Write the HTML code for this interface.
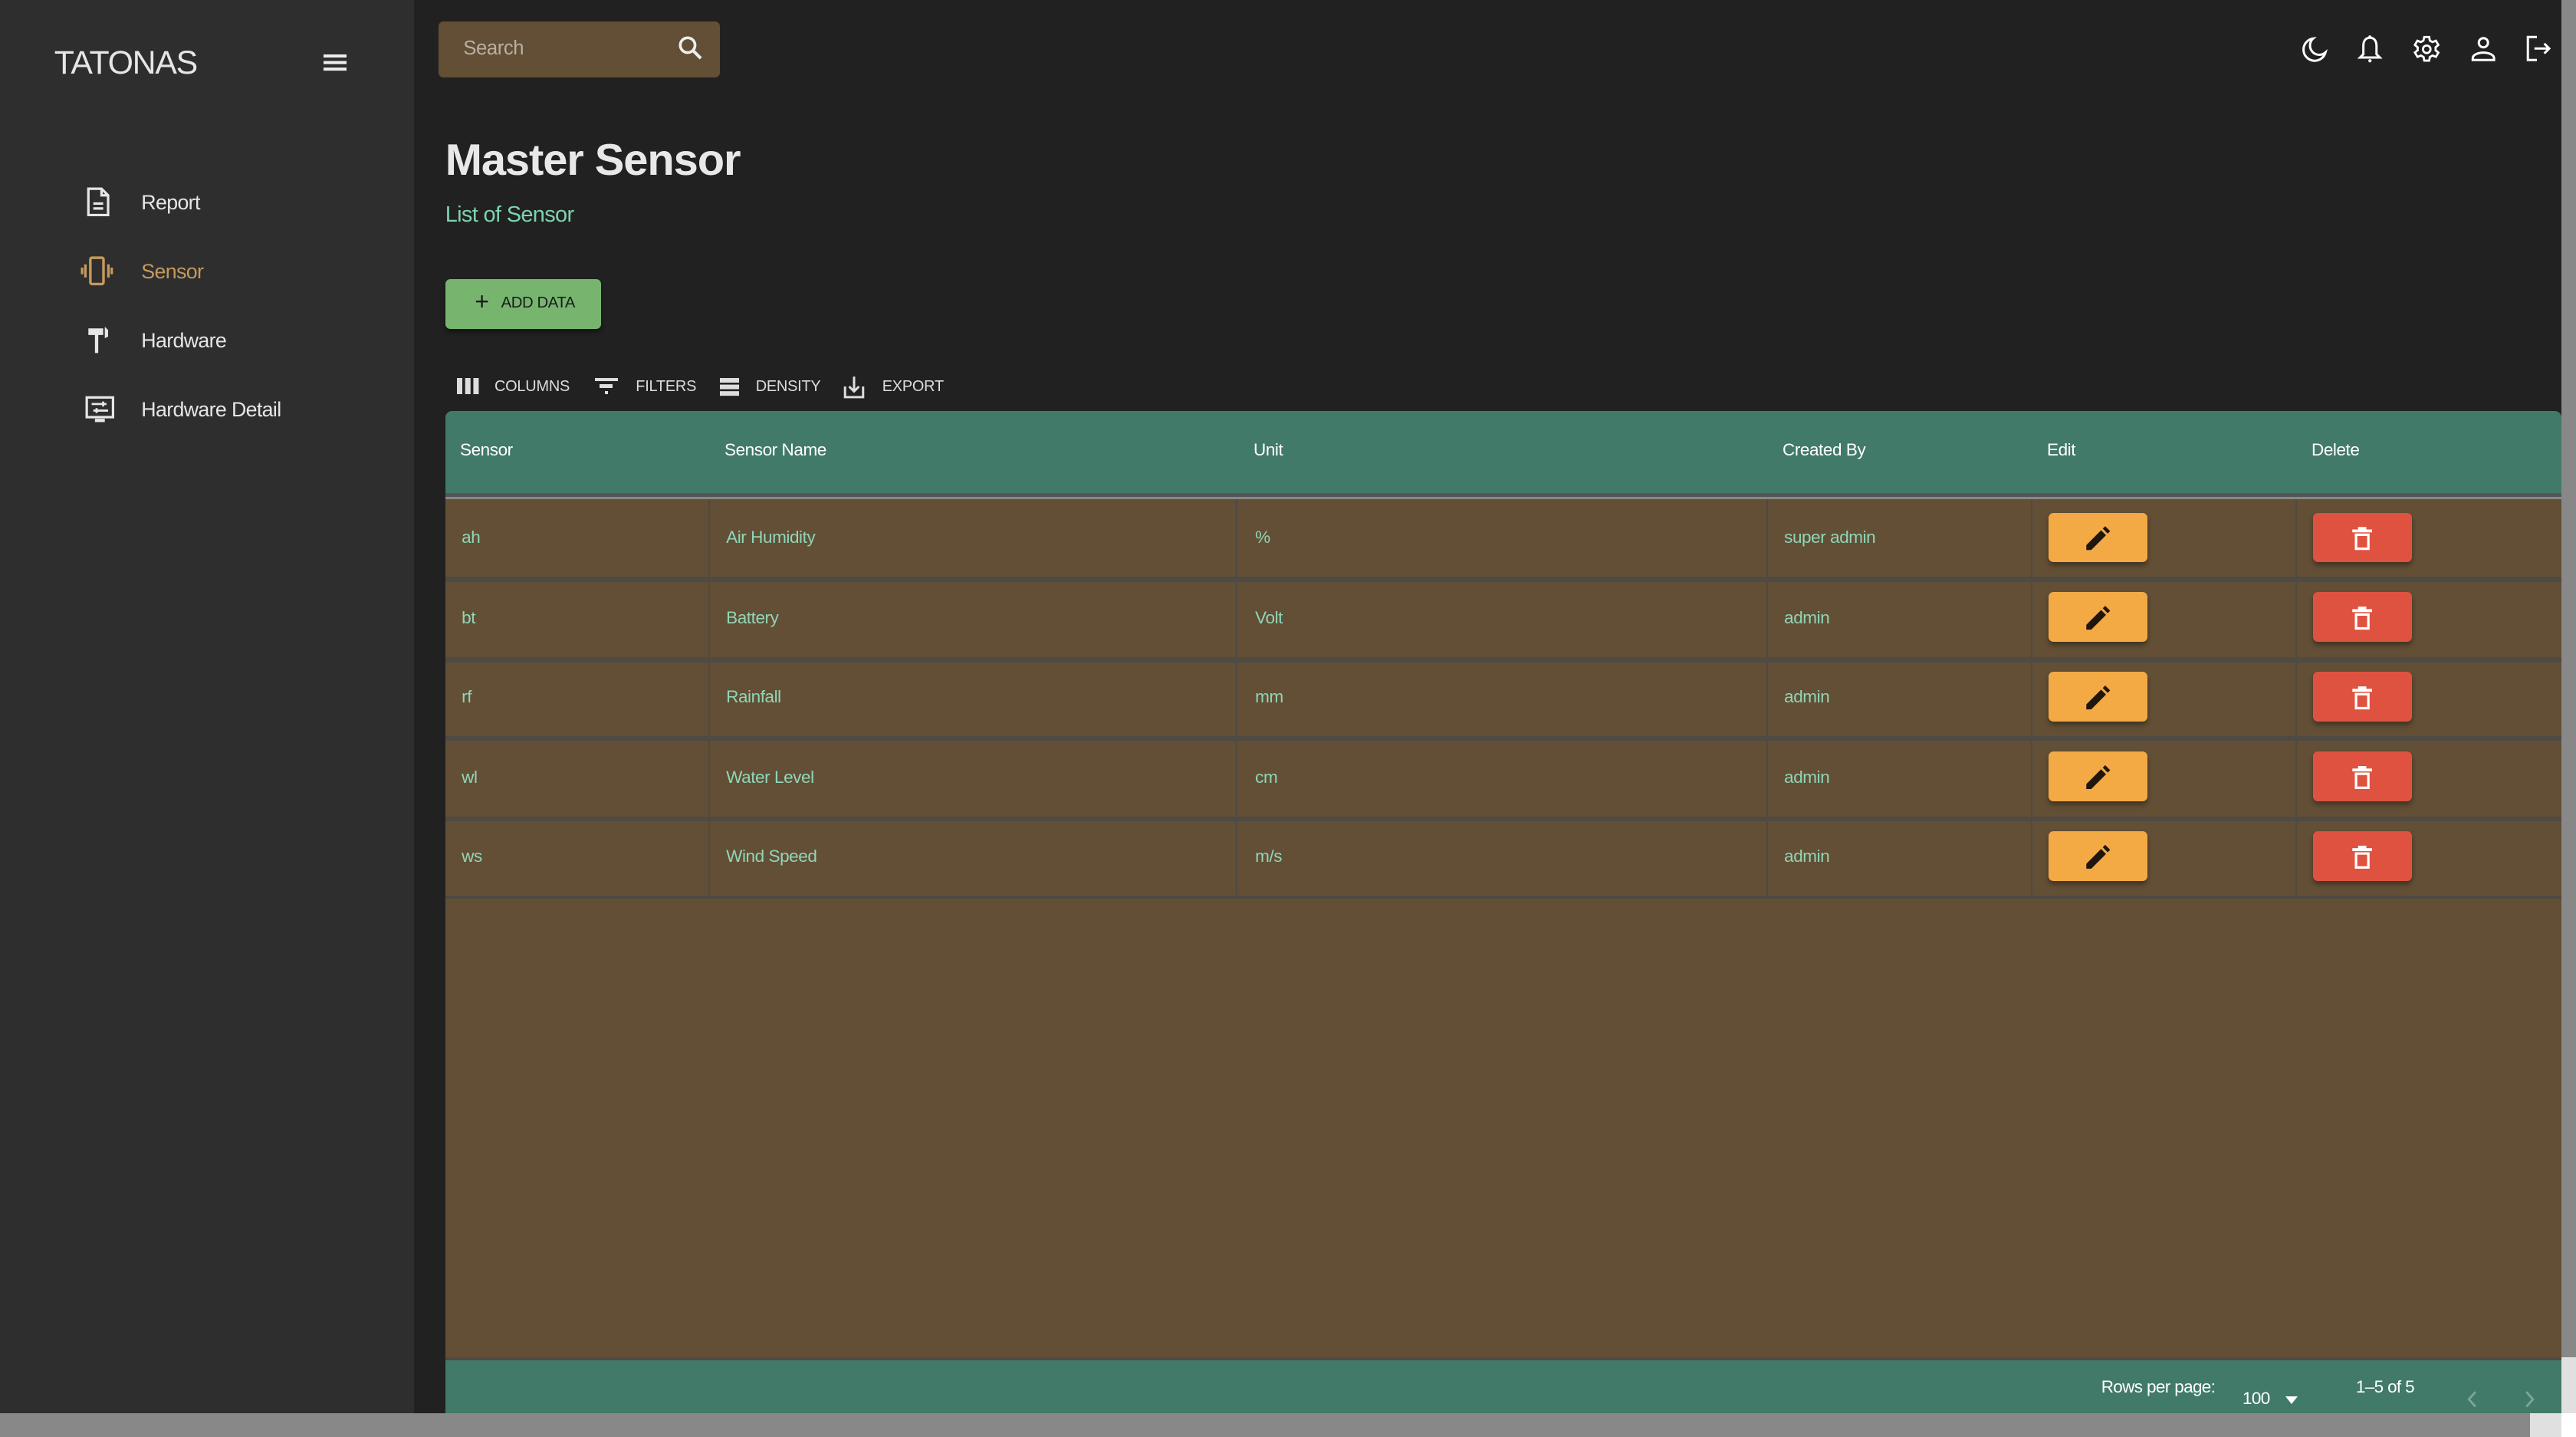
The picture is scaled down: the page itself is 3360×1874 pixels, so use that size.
<!DOCTYPE html>
<html><head><meta charset="utf-8"><style>
*{box-sizing:border-box;margin:0;padding:0}
html,body{width:3360px;height:1874px;overflow:hidden;background:#212121}
#z{zoom:2.142857;width:1568px;height:874.6px;position:relative;font-family:"Liberation Sans",sans-serif;color:#e6e6e6;overflow:hidden}
.a{position:absolute}
.side{left:0;top:0;width:252px;height:875px;background:#2e2e2e}
.nav{left:52px;font-size:12.5px;color:#e6e6e6;letter-spacing:-.3px}
.nav svg{position:absolute;left:0;top:-9px}
.nav span{position:absolute;left:34px;top:-7px;white-space:nowrap}
.tb{top:230px;font-size:9.3px;color:#ddd;letter-spacing:-.1px}
.th{top:268px;font-size:10.5px;color:#fff;letter-spacing:-.2px}
.td{font-size:10.5px;color:#8fd6b9;letter-spacing:-.2px}
.eb{width:60px;height:30px;border-radius:3px;box-shadow:0 2px 3px rgba(0,0,0,.35)}
</style></head><body><div id="z">
<div class="a side"></div>
<div class="a" style="left:33px;top:27px;font-size:20px;color:#e6e6e6;letter-spacing:-.6px">TATONAS</div>
<div class="a" style="left:197px;top:33px;width:14px;height:2px;background:#eee;box-shadow:0 4px 0 #eee,0 8px 0 #eee"></div>

<div class="a nav" style="top:123px"><svg width="16" height="18" viewBox="0 0 16 18"><path d="M2 1h8l4 4v12H2z M10 1v4h4 M5 10h6 M5 13h6" fill="none" stroke="#e6e6e6" stroke-width="1.5"/></svg><span>Report</span></div>
<div class="a nav" style="top:165px;color:#c59a5d"><svg width="20" height="18" viewBox="0 0 20 18" style="left:-3px"><rect x="6" y="1" width="8" height="16" rx="1" fill="none" stroke="#c59a5d" stroke-width="1.6"/><path d="M3 5v8M1 7v4M17 5v8M19 7v4" stroke="#c59a5d" stroke-width="1.5"/></svg><span>Sensor</span></div>
<div class="a nav" style="top:207px"><svg width="16" height="18" viewBox="0 0 16 18"><path d="M2 2h9v4H8v11H6V6H2z M12 1l2 2v4l-2 1z" fill="#e6e6e6"/></svg><span>Hardware</span></div>
<div class="a nav" style="top:249px"><svg width="18" height="18" viewBox="0 0 18 18"><rect x="1" y="2" width="16" height="12" fill="none" stroke="#e6e6e6" stroke-width="1.5"/><path d="M6 15h6v2H6z" fill="#e6e6e6"/><path d="M4 6h9M11 4.5v3M5 10h9M7 8.5v3" stroke="#e6e6e6" stroke-width="1.3"/></svg><span>Hardware Detail</span></div>

<div class="a" style="left:267px;top:13px;width:171px;height:34px;background:#634f35;border-radius:3px"></div>
<div class="a" style="left:282px;top:23px;font-size:12px;color:#b8b0a4;letter-spacing:-.2px">Search</div>
<svg class="a" style="left:412px;top:21px" width="16" height="16" viewBox="0 0 16 16"><circle cx="6.5" cy="6.5" r="4.5" fill="none" stroke="#eee" stroke-width="1.7"/><path d="M10 10l4.5 4.5" stroke="#eee" stroke-width="1.9"/></svg>

<svg class="a" style="left:1400px;top:22px" width="17" height="17" viewBox="0 0 17 17"><path d="M8 1.5A6.8 6.8 0 1 0 15.5 10 5.5 5.5 0 0 1 8 1.5z" fill="none" stroke="#fff" stroke-width="1.4"/></svg>
<svg class="a" style="left:1434px;top:21px" width="17" height="18" viewBox="0 0 17 18"><path d="M8.5 2C5.5 2 4.5 4.5 4.5 7v5L2.5 14h12l-2-2V7c0-2.5-1-5-4-5z" fill="none" stroke="#fff" stroke-width="1.4"/><circle cx="8.5" cy="16" r="1" fill="#fff"/><circle cx="8.5" cy="1.5" r="1" fill="#fff"/></svg>
<svg class="a" style="left:1468px;top:21px" width="18" height="18" viewBox="0 0 18 18"><path d="M7.5 1.5h3l.4 2.2 1.6.9 2.1-.8 1.5 2.6-1.7 1.4v1.8l1.7 1.4-1.5 2.6-2.1-.8-1.6.9-.4 2.2h-3l-.4-2.2-1.6-.9-2.1.8L1.8 11l1.7-1.4V7.8L1.8 6.4l1.5-2.6 2.1.8 1.6-.9z" fill="none" stroke="#fff" stroke-width="1.3"/><circle cx="9" cy="9" r="2.3" fill="none" stroke="#fff" stroke-width="1.3"/></svg>
<svg class="a" style="left:1503px;top:21px" width="17" height="17" viewBox="0 0 17 17"><circle cx="8.5" cy="5" r="2.8" fill="none" stroke="#fff" stroke-width="1.4"/><path d="M2 15.5v-1c0-2 3-3.5 6.5-3.5s6.5 1.5 6.5 3.5v1z" fill="none" stroke="#fff" stroke-width="1.4"/></svg>
<svg class="a" style="left:1537px;top:21px" width="17" height="17" viewBox="0 0 17 17"><path d="M7 1.5H1.5v14H7" fill="none" stroke="#fff" stroke-width="1.4"/><path d="M5.5 8.5h9M11.5 5.5l3 3-3 3" fill="none" stroke="#fff" stroke-width="1.4"/></svg>

<div class="a" style="left:271px;top:82px;font-size:27px;font-weight:bold;color:#e8e8e8;letter-spacing:-.5px">Master Sensor</div>
<div class="a" style="left:271px;top:123px;font-size:13.5px;color:#7dd3b0;letter-spacing:-.3px">List of Sensor</div>

<div class="a" style="left:271px;top:170px;width:95px;height:30px;background:#77b56f;border-radius:3px;box-shadow:0 2px 3px rgba(0,0,0,.4)"></div>
<div class="a" style="left:289px;top:176px;font-size:15px;color:#1a1a1a;line-height:15px">+</div>
<div class="a" style="left:305px;top:179px;font-size:9.5px;color:#1a1a1a;letter-spacing:-.2px">ADD DATA</div>

<div class="a" style="left:278px;top:230px;width:3.5px;height:10px;background:#ddd;box-shadow:5px 0 0 #ddd,10px 0 0 #ddd"></div>
<div class="a tb" style="left:301px">COLUMNS</div>
<div class="a" style="left:362px;top:230px;width:14px;height:2px;background:#ddd"></div><div class="a" style="left:365px;top:234px;width:8px;height:2px;background:#ddd"></div><div class="a" style="left:368px;top:238px;width:2px;height:2px;background:#ddd"></div>
<div class="a tb" style="left:387px">FILTERS</div>
<div class="a" style="left:438px;top:230px;width:12px;height:3px;background:#ddd;box-shadow:0 4px 0 #ddd,0 8px 0 #ddd"></div>
<div class="a tb" style="left:460px">DENSITY</div>
<svg class="a" style="left:513px;top:228px" width="14" height="15" viewBox="0 0 14 15"><path d="M1.5 7v6.5h11V7M7 1v9M4 7l3 3 3-3" fill="none" stroke="#ddd" stroke-width="1.4"/></svg>
<div class="a tb" style="left:537px">EXPORT</div>

<div class="a" style="left:271px;top:250px;width:1288px;height:50px;background:#417a69;border-radius:4px 4px 0 0"></div>
<div class="a" style="left:271px;top:300px;width:1288px;height:4px;background:#555;border-bottom:1.5px solid #888"></div>
<div class="a th" style="left:280px">Sensor</div>
<div class="a th" style="left:441px">Sensor Name</div>
<div class="a th" style="left:763px">Unit</div>
<div class="a th" style="left:1085px">Created By</div>
<div class="a th" style="left:1246px">Edit</div>
<div class="a th" style="left:1407px">Delete</div>

<div class="a" style="left:271px;top:304px;width:1288px;height:524px;background:#634f35"></div>
<div class="a" style="left:271px;top:351px;width:1288px;height:3px;background:#4e4a44"></div>
<div class="a" style="left:271px;top:400px;width:1288px;height:3px;background:#4e4a44"></div>
<div class="a" style="left:271px;top:448px;width:1288px;height:3px;background:#4e4a44"></div>
<div class="a" style="left:271px;top:497px;width:1288px;height:3px;background:#4e4a44"></div>
<div class="a" style="left:271px;top:545px;width:1288px;height:2px;background:#4e4a44"></div>
<div class="a" style="left:431px;top:304px;width:1.2px;height:242px;background:#4e4a44;box-shadow:321px 0 0 #4e4a44,644px 0 0 #4e4a44,805px 0 0 #4e4a44,966px 0 0 #4e4a44"></div>

<div class="a td" style="left:281px;top:321px">ah</div><div class="a td" style="left:442px;top:321px">Air Humidity</div><div class="a td" style="left:764px;top:321px">%</div><div class="a td" style="left:1086px;top:321px">super admin</div>
<div class="a td" style="left:281px;top:370px">bt</div><div class="a td" style="left:442px;top:370px">Battery</div><div class="a td" style="left:764px;top:370px">Volt</div><div class="a td" style="left:1086px;top:370px">admin</div>
<div class="a td" style="left:281px;top:418px">rf</div><div class="a td" style="left:442px;top:418px">Rainfall</div><div class="a td" style="left:764px;top:418px">mm</div><div class="a td" style="left:1086px;top:418px">admin</div>
<div class="a td" style="left:281px;top:467px">wl</div><div class="a td" style="left:442px;top:467px">Water Level</div><div class="a td" style="left:764px;top:467px">cm</div><div class="a td" style="left:1086px;top:467px">admin</div>
<div class="a td" style="left:281px;top:515px">ws</div><div class="a td" style="left:442px;top:515px">Wind Speed</div><div class="a td" style="left:764px;top:515px">m/s</div><div class="a td" style="left:1086px;top:515px">admin</div>

<div class="a" style="left:1247px;top:312px">
<div class="eb" style="position:absolute;top:0;background:#f3a944"></div><div class="eb" style="position:absolute;top:48.5px;background:#f3a944"></div><div class="eb" style="position:absolute;top:97px;background:#f3a944"></div><div class="eb" style="position:absolute;top:145.5px;background:#f3a944"></div><div class="eb" style="position:absolute;top:194px;background:#f3a944"></div>
</div>
<div class="a" style="left:1408px;top:312px">
<div class="eb" style="position:absolute;top:0;background:#e05240"></div><div class="eb" style="position:absolute;top:48.5px;background:#e05240"></div><div class="eb" style="position:absolute;top:97px;background:#e05240"></div><div class="eb" style="position:absolute;top:145.5px;background:#e05240"></div><div class="eb" style="position:absolute;top:194px;background:#e05240"></div>
</div>
<svg class="a" style="left:1268px;top:319px" width="18" height="230" viewBox="0 0 18 230">
<defs><path id="p" d="M2 15.5v-3L11 3.5l3 3L5 15.5zM12 2.5l1.5-1.5 3 3L15 5.5z" fill="#1f160d"/></defs>
<use href="#p"/><use href="#p" y="48.5"/><use href="#p" y="97"/><use href="#p" y="145.5"/><use href="#p" y="194"/>
</svg>
<svg class="a" style="left:1430px;top:319px" width="16" height="230" viewBox="0 0 16 230">
<defs><path id="t" d="M2 3h12v1.8H2zM5.5 1.5h5V3h-5zM3.5 5.5h9v10h-9z M5 7v7h6V7z" fill="#fff" fill-rule="evenodd"/></defs>
<use href="#t"/><use href="#t" y="48.5"/><use href="#t" y="97"/><use href="#t" y="145.5"/><use href="#t" y="194"/>
</svg>

<div class="a" style="left:271px;top:826px;width:1288px;height:2px;background:#4e4a44"></div>
<div class="a" style="left:271px;top:828px;width:1288px;height:32px;background:#417a69"></div>
<div class="a" style="left:1279px;top:838px;font-size:10.5px;color:#fff;letter-spacing:-.3px">Rows per page:</div>
<div class="a" style="left:1365px;top:845px;font-size:10.5px;color:#fff;letter-spacing:-.3px">100</div>
<div class="a" style="left:1391px;top:850px;width:0;height:0;border-left:4px solid transparent;border-right:4px solid transparent;border-top:5px solid #fff"></div>
<div class="a" style="left:1434px;top:838px;font-size:10.5px;color:#fff;letter-spacing:-.3px">1–5 of 5</div>
<svg class="a" style="left:1501px;top:846px" width="8" height="11" viewBox="0 0 8 11"><path d="M6 1L2 5.5 6 10" fill="none" stroke="#7aa898" stroke-width="1.3"/></svg>
<svg class="a" style="left:1536px;top:846px" width="8" height="11" viewBox="0 0 8 11"><path d="M2 1l4 4.5L2 10" fill="none" stroke="#7aa898" stroke-width="1.3"/></svg>

<div class="a" style="left:1559px;top:0;width:9px;height:826px;background:#888"></div>
<div class="a" style="left:1559px;top:826px;width:9px;height:34px;background:#e0e0e0"></div>
<div class="a" style="left:0;top:860px;width:1540px;height:15px;background:#888"></div>
<div class="a" style="left:1540px;top:860px;width:19px;height:15px;background:#e0e0e0"></div>
<div class="a" style="left:1559px;top:860px;width:9px;height:15px;background:#fff"></div>
</div></body></html>
